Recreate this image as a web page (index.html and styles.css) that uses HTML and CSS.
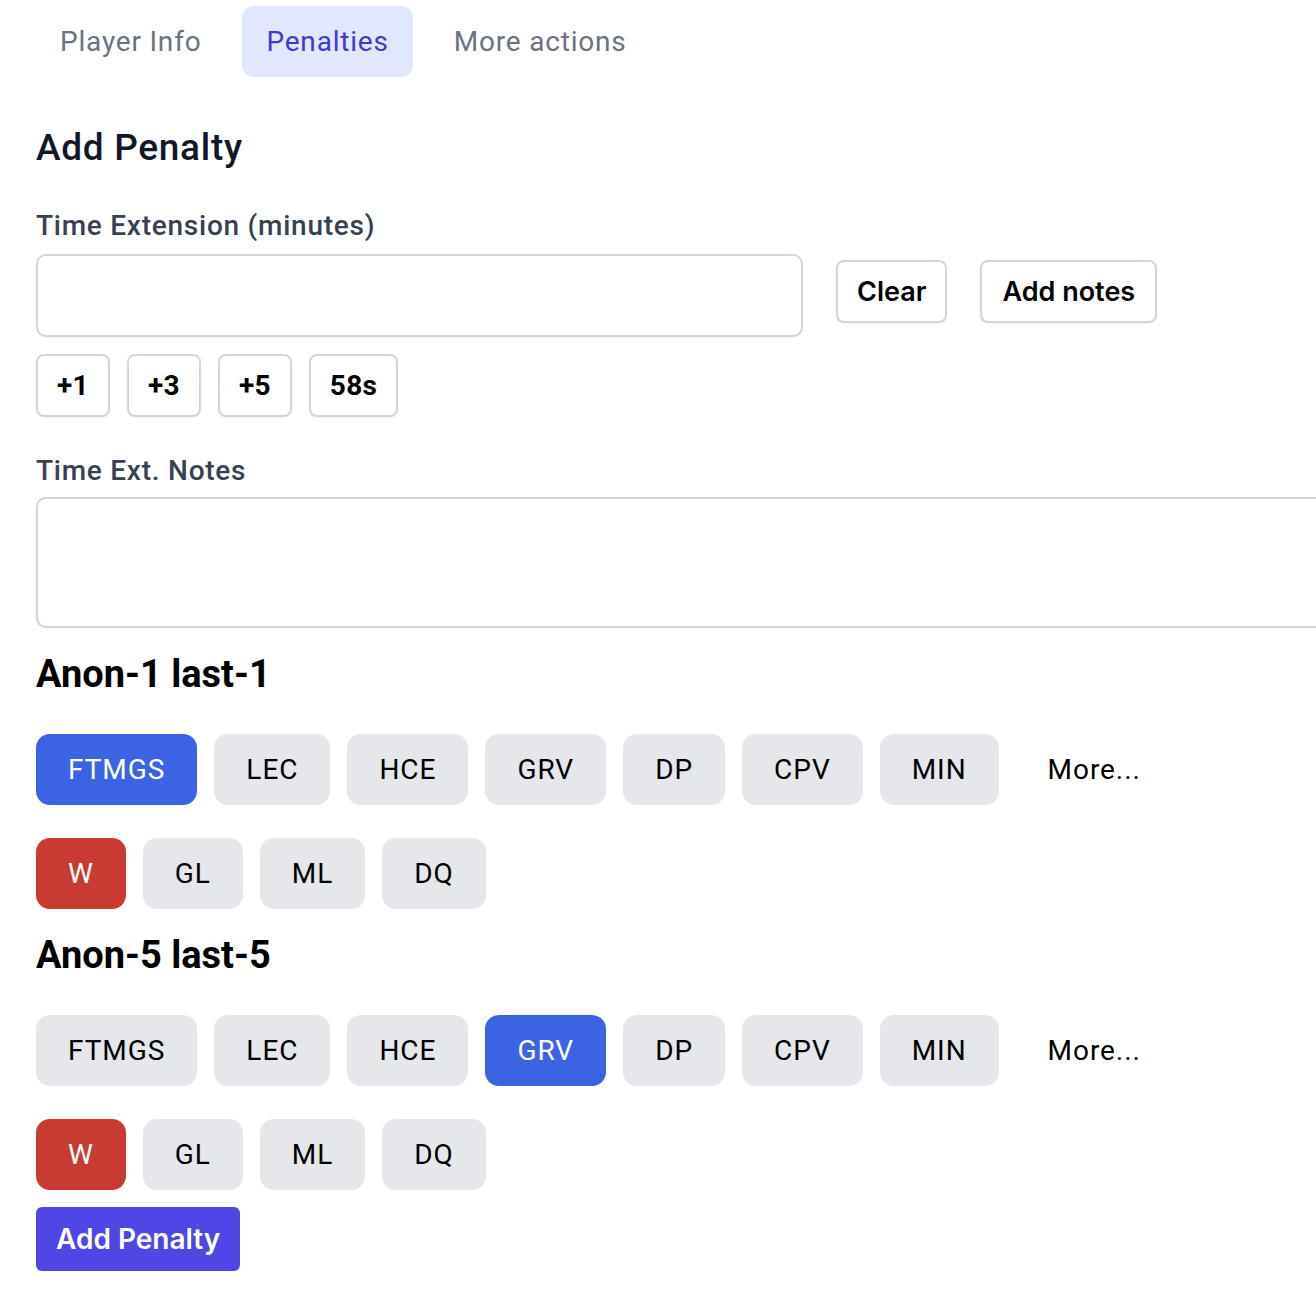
FILE: index.html
```html
<!DOCTYPE html>
<html>
<head>
<meta charset="utf-8">
<link rel="stylesheet" href="styles.css">
</head>
<body>
<div class="page">
  <nav class="tabs">
    <div class="tab">Player Info</div>
    <div class="tab active">Penalties</div>
    <div class="tab">More actions</div>
  </nav>

  <h2 class="title">Add Penalty</h2>

  <label class="label">Time Extension (minutes)</label>
  <div class="ext-row">
    <div class="input"></div>
    <button class="btn">Clear</button>
    <button class="btn">Add notes</button>
  </div>
  <div class="quick-row">
    <button class="qbtn">+1</button>
    <button class="qbtn">+3</button>
    <button class="qbtn">+5</button>
    <button class="qbtn">58s</button>
  </div>

  <label class="label notes-label">Time Ext. Notes</label>
  <div class="textarea"></div>

  <section class="player">
    <h3 class="pname">Anon-1 last-1</h3>
    <div class="chips first">
      <span class="chip blue">FTMGS</span>
      <span class="chip">LEC</span>
      <span class="chip">HCE</span>
      <span class="chip">GRV</span>
      <span class="chip">DP</span>
      <span class="chip">CPV</span>
      <span class="chip">MIN</span>
      <span class="chip plain">More...</span>
    </div>
    <div class="chips second">
      <span class="chip red">W</span>
      <span class="chip">GL</span>
      <span class="chip">ML</span>
      <span class="chip">DQ</span>
    </div>
  </section>

  <section class="player">
    <h3 class="pname">Anon-5 last-5</h3>
    <div class="chips first">
      <span class="chip">FTMGS</span>
      <span class="chip">LEC</span>
      <span class="chip">HCE</span>
      <span class="chip blue">GRV</span>
      <span class="chip">DP</span>
      <span class="chip">CPV</span>
      <span class="chip">MIN</span>
      <span class="chip plain">More...</span>
    </div>
    <div class="chips second">
      <span class="chip red">W</span>
      <span class="chip">GL</span>
      <span class="chip">ML</span>
      <span class="chip">DQ</span>
    </div>
  </section>

  <button class="submit">Add Penalty</button>
</div>
</body>
</html>
```

FILE: styles.css
```css
* { box-sizing: border-box; }
html, body { margin: 0; padding: 0; background: #fff; }
body {
  font-family: Roboto, "Liberation Sans", sans-serif;
  color: #000;
  overflow: hidden;
}
.page {
  padding: 6px 0 0 36px;
  width: 1316px;
}
.tabs {
  display: flex;
  gap: 17px;
}
.tab {
  font-size: 28px;
  line-height: 39px;
  padding: 16px 24px;
  border-radius: 12px;
  color: #6b7280;
  letter-spacing: 0.8px;
}
.tab.active {
  background: #e0e7ff;
  color: #4338ca;
}
.title {
  margin: 49px 0 0 0;
  font-size: 37px;
  line-height: 44px;
  font-weight: 500;
  color: #111827;
  letter-spacing: 0.7px;
}
.label {
  display: block;
  margin-top: 39px;
  font-size: 28px;
  line-height: 34px;
  font-weight: 500;
  color: #374151;
  letter-spacing: 0.75px;
}
.ext-row {
  margin-top: 11px;
  display: flex;
  align-items: flex-start;
  gap: 33px;
}
.input {
  width: 767px;
  height: 83px;
  border: 2px solid #d1d5db;
  border-radius: 10px;
  box-shadow: 0 1px 2px rgba(0,0,0,0.05);
}
.btn {
  margin-top: 6px;
  font-family: Inter, Roboto, sans-serif;
  font-size: 27px;
  font-weight: 600;
  color: #000;
  background: #fff;
  border: 2px solid #d1d5db;
  border-radius: 8px;
  height: 63px;
  padding: 0 19px;
  box-shadow: 0 1px 2px rgba(0,0,0,0.05);
}
.btn + .btn { padding: 0 20px; }
.quick-row {
  margin-top: 17px;
  display: flex;
  gap: 17px;
}
.qbtn {
  font-family: Roboto, sans-serif;
  font-size: 28px;
  font-weight: 700;
  color: #000;
  background: #fff;
  border: 2px solid #d1d5db;
  border-radius: 8px;
  height: 63px;
  padding: 0 19px;
  letter-spacing: 0.3px;
  box-shadow: 0 1px 2px rgba(0,0,0,0.05);
}
.notes-label { margin-top: 37px; }
.textarea {
  margin-top: 9px;
  width: 1300px;
  height: 131px;
  border: 2px solid #d1d5db;
  border-right: none;
  border-radius: 10px 0 0 10px;
  box-shadow: 0 1px 2px rgba(0,0,0,0.05);
}
.player { margin-top: 24px; }
.pname {
  margin: 0;
  font-size: 38px;
  line-height: 44px;
  font-weight: 700;
  color: #000;
}
.chips {
  display: flex;
  gap: 17px;
}
.chips.first { margin-top: 38px; }
.chips.second { margin-top: 33px; }
.chip {
  font-size: 28px;
  line-height: 71px;
  height: 71px;
  padding: 0 32px;
  border-radius: 14px;
  background: #e5e7eb;
  color: #000;
  letter-spacing: 0.95px;
}
.chip.blue { background: #3b63e3; color: #fff; }
.chip.red { background: #c93a32; color: #fff; }
.chip.plain { background: transparent; }
.submit {
  margin-top: 17px;
  font-family: Inter, Roboto, sans-serif;
  font-size: 28px;
  font-weight: 600;
  color: #fff;
  background: #4f46e5;
  border: none;
  border-radius: 6px;
  height: 64px;
  padding: 0 20px;
}
```
